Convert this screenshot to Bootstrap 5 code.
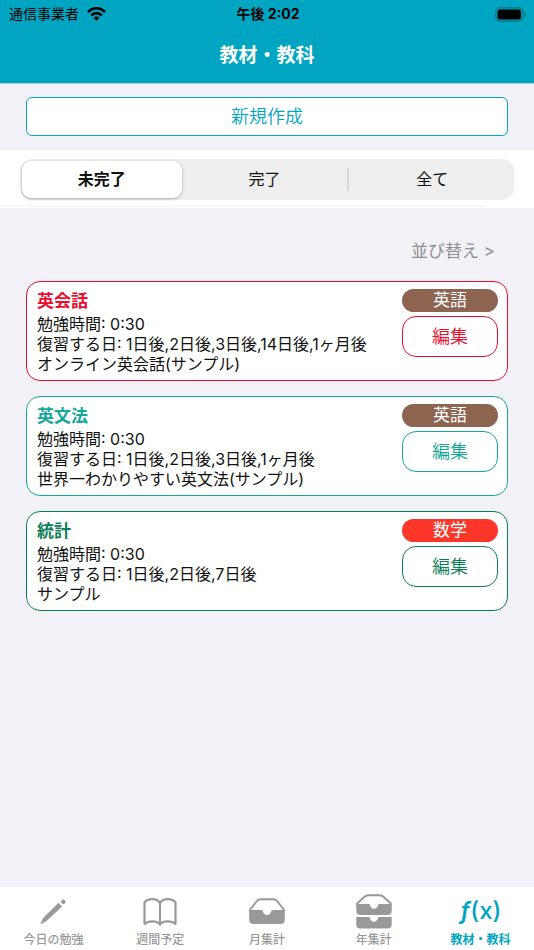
<!DOCTYPE html>
<html lang="ja">
<head>
<meta charset="utf-8">
<meta name="viewport" content="width=device-width, initial-scale=1">
<title>教材・教科</title>
<link href="https://cdn.jsdelivr.net/npm/bootstrap@5.3.0/dist/css/bootstrap.min.css" rel="stylesheet">
<style>
:root { --teal: #00a6c1; --page: #f2f1f7; }
body { background: var(--page); color: #111; font-family: Inter, "Noto Sans CJK JP", sans-serif; font-size: 16px; line-height: 20px; }
.top-area { background: var(--teal); border-bottom: 1px solid #a9cdd8; }
.status-bar { display: grid; grid-template-columns: 1fr auto 1fr; height: 28px; padding: 0 7px 0 9px; font-size: 14px; color: #000; }
.screen-title { font-size: 19px; line-height: 28px; font-weight: 700; padding: 14px 0 13px; }
.edge { padding-left: 26px; padding-right: 26px; }
.create-row { padding-top: 13px; padding-bottom: 14px; }
.btn-create { --bs-btn-color: var(--teal); --bs-btn-border-color: var(--teal); --bs-btn-bg: #fff; --bs-btn-hover-color: #fff; --bs-btn-hover-bg: var(--teal); --bs-btn-border-radius: 6px; --bs-btn-font-size: 18px; --bs-btn-line-height: 27px; --bs-btn-padding-y: 5px; --bs-btn-font-weight: 350; }
.filter-band { padding: 9px 20px 5px; }
.segments { background: #eee; border-radius: 12px; padding: 2px; gap: 3px; }
.segment { font-size: 16px; line-height: 37px; text-align: center; border-radius: 9px; cursor: pointer; flex: 1 1 0; }
.btn-check:checked + .segment { background: #fff; font-weight: 700; box-shadow: 0 1px 3px rgba(0,0,0,.28); }
.segment-line { width: 2px; height: 23px; background: #d9d9da; }
.scroll-track { padding-bottom: 1px; }
.scroll-hint { height: 2px; width: 91%; background: #f7f6fa; }
.sort-link { font-size: 17px; line-height: 26px; color: #8e8e93; padding: 30px 39px 17px; }
.material-list { gap: 15px; }
.material { --tone: #eb0c2d; border: 1px solid var(--tone); border-radius: 14px; padding: 7px 9px 6px 10px; background: #fff; }
.tone-teal { --tone: #11a899; }
.tone-green { --tone: #0b7d58; }
.material h2 { color: var(--tone); font-size: 17px; line-height: 25px; font-weight: 700; margin: 0; }
.material-side { width: 96px; }
.subject { background: #8d6450; color: #fff; font-size: 17px; line-height: 23px; text-align: center; }
.subject-math { background: #fc3729; }
.btn-edit { --bs-btn-color: var(--tone); --bs-btn-border-color: var(--tone); --bs-btn-hover-color: #fff; --bs-btn-hover-bg: var(--tone); --bs-btn-border-radius: 14px; --bs-btn-font-size: 18px; --bs-btn-line-height: 29px; --bs-btn-padding-y: 5px; --bs-btn-padding-x: 0; --bs-btn-font-weight: 350; }
.tab-link { flex: 1 1 0; color: #999; font-size: 12px; line-height: 18px; font-weight: 500; padding: 5px 0 1px; }
.tab-link.active { color: var(--teal); font-weight: 700; }
.tab-icon { height: 39px; }
.fx { font: italic 600 24px/38px Inter, sans-serif; }
.fx span { font-style: normal; font-weight: 500; }
</style>
<script src="https://cdn.jsdelivr.net/npm/bootstrap@5.3.0/dist/js/bootstrap.bundle.min.js" defer></script>
</head>
<body class="d-flex flex-column min-vh-100">
<header class="top-area">
  <div class="status-bar align-items-center">
    <div class="d-flex align-items-center gap-2">
      <span>通信事業者</span>
      <svg width="19" height="14" viewBox="0 0 19 14" fill="none" stroke="#000" stroke-width="2.6" aria-hidden="true"><path d="M1 5.2C6-.1 13-.1 18 5.2M4.2 8.4c3-3.1 7.6-3.1 10.600 0"/><path d="M6.500 10.700c1.700-1.700 4.300-1.700 6 0l-3 3z" fill="#000" stroke="none"/></svg>
    </div>
    <span class="fw-bold">午後 2:02</span>
    <svg class="ms-auto" width="32" height="15" viewBox="0 0 32 15" aria-hidden="true"><rect x=".8" y=".8" width="27" height="13.400" rx="4" fill="none" stroke="#066d7f" stroke-width="1.300"/><rect x="2.500" y="2.500" width="23.500" height="10" rx="2.300"/><path d="M29.600 5.300c2 .5 2 3.900 0 4.400z" fill="#066d7f"/></svg>
  </div>
  <h1 class="screen-title text-center text-white m-0">教材・教科</h1>
</header>

<main class="flex-grow-1">
  <div class="edge create-row"><button type="button" class="btn btn-create w-100">新規作成</button></div>

  <div class="bg-white scroll-track">
    <div class="filter-band">
      <div class="segments d-flex align-items-center" role="group" aria-label="表示">
        <input class="btn-check" type="radio" name="state" id="open" checked><label class="segment" for="open">未完了</label>
        <input class="btn-check" type="radio" name="state" id="done"><label class="segment" for="done">完了</label>
        <span class="segment-line"></span>
        <input class="btn-check" type="radio" name="state" id="all"><label class="segment" for="all">全て</label>
      </div>
    </div>
    <div class="scroll-hint"></div>
  </div>

  <div class="text-end"><a href="#" class="sort-link d-inline-block text-decoration-none">並び替え &gt;</a></div>

  <div class="edge d-grid material-list">
    <article class="material d-flex justify-content-between">
      <div><h2>英会話</h2><div>勉強時間: 0:30</div><div>復習する日: 1日後,2日後,3日後,14日後,1ヶ月後</div><div>オンライン英会話(サンプル)</div></div>
      <div class="material-side d-grid gap-1 align-content-start flex-shrink-0"><span class="subject rounded-pill">英語</span><button type="button" class="btn btn-edit">編集</button></div>
    </article>
    <article class="material tone-teal d-flex justify-content-between">
      <div><h2>英文法</h2><div>勉強時間: 0:30</div><div>復習する日: 1日後,2日後,3日後,1ヶ月後</div><div>世界一わかりやすい英文法(サンプル)</div></div>
      <div class="material-side d-grid gap-1 align-content-start flex-shrink-0"><span class="subject rounded-pill">英語</span><button type="button" class="btn btn-edit">編集</button></div>
    </article>
    <article class="material tone-green d-flex justify-content-between">
      <div><h2>統計</h2><div>勉強時間: 0:30</div><div>復習する日: 1日後,2日後,7日後</div><div>サンプル</div></div>
      <div class="material-side d-grid gap-1 align-content-start flex-shrink-0"><span class="subject subject-math rounded-pill">数学</span><button type="button" class="btn btn-edit">編集</button></div>
    </article>
  </div>
</main>

<nav class="bg-white d-flex text-center sticky-bottom" aria-label="メイン">
  <a href="#" class="tab-link text-decoration-none"><div class="tab-icon d-flex align-items-center justify-content-center"><svg width="26" height="26" viewBox="0 0 26 26" aria-hidden="true"><path d="M18.500 4.200l3.200 3.200L6.300 21.800 1.200 24.700 3.500 19z" fill="currentColor" stroke="currentColor" stroke-width=".8" stroke-linejoin="round"/><circle cx="23.300" cy="2.700" r="2.200" fill="currentColor"/></svg></div>今日の勉強</a>
  <a href="#" class="tab-link text-decoration-none"><div class="tab-icon d-flex align-items-center justify-content-center"><svg width="34" height="28" viewBox="0 0 34 28" fill="none" stroke="currentColor" stroke-width="2.200" stroke-linejoin="round" aria-hidden="true"><path d="M17 5C14 0 5 0 1.500 4.500V26c4-3.500 12.500-3.500 15.500.5 3-4 11.500-4 15.500-.5V4.500C29 0 20 0 17 5V26.500"/></svg></div>週間予定</a>
  <a href="#" class="tab-link text-decoration-none"><div class="tab-icon d-flex align-items-center justify-content-center"><svg width="36" height="27" viewBox="0 0 36 27" aria-hidden="true"><path d="M1.200 14V11.500L7.500 3.500Q9 1.200 11.500 1.200h13Q27 1.200 28.500 3.500l6.300 8V14" fill="none" stroke="currentColor" stroke-width="2"/><path d="M.2 12H12.500q1.200 0 1.400 1.500c.8 4.700 7.400 4.700 8.200 0q.2-1.500 1.400-1.500H35.800V21.500q0 4.500-4.500 4.500H4.700Q.2 26 .2 21.500z" fill="currentColor"/></svg></div>月集計</a>
  <a href="#" class="tab-link text-decoration-none"><div class="tab-icon d-flex align-items-center justify-content-center"><svg width="36" height="35" viewBox="0 0 36 35" aria-hidden="true"><path d="M1.200 12V9.500L8 3.300Q10 1.200 12.500 1.200h11Q26 1.200 28 3.300l6.800 6.200V12" fill="none" stroke="currentColor" stroke-width="2"/><path d="M.3 10H12.800q1.200 0 1.400 1.500c.6 4.200 7 4.200 7.600 0q.2-1.500 1.400-1.500H35.700v7q0 4-4 4H4.300q-4 0-4-4zM.3 23H12.800q1.200 0 1.400 1.500c.6 4.200 7 4.200 7.600 0q.2-1.500 1.400-1.500H35.700V30.500q0 4-4 4H4.300q-4 0-4-4z" fill="currentColor"/></svg></div>年集計</a>
  <a href="#" class="tab-link active text-decoration-none" aria-current="page"><div class="tab-icon fx">ƒ<span>(x)</span></div>教材・教科</a>
</nav>
</body>
</html>
